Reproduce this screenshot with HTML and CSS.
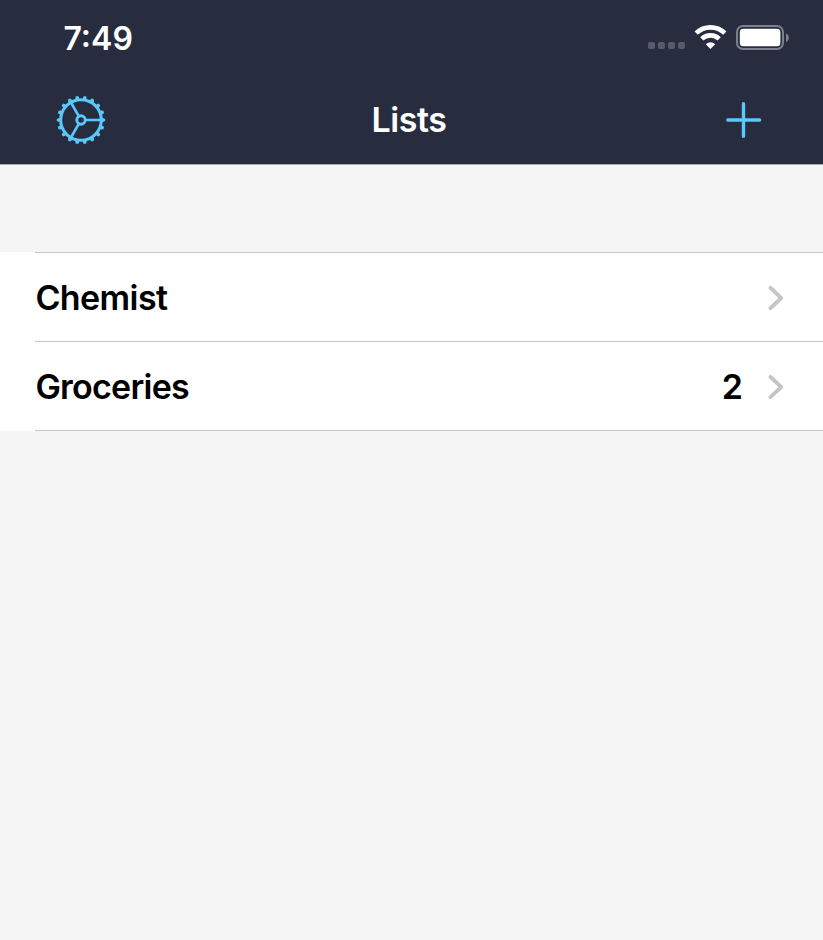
FILE: index.html
```html
<!DOCTYPE html>
<html lang="en">
<head>
<meta charset="utf-8">
<title>Lists</title>
<link rel="stylesheet" href="styles.css">
</head>
<body>
<header class="header">
  <div class="status">
    <span class="time">7:49</span>
    <svg class="indicators" width="142" height="28" viewBox="0 0 142 28" aria-hidden="true">
      <g fill="#575b69">
        <rect x="0" y="19" width="7" height="7" rx="2"/>
        <rect x="10" y="19" width="7" height="7" rx="2"/>
        <rect x="20" y="19" width="7" height="7" rx="2"/>
        <rect x="30" y="19" width="7" height="7" rx="2"/>
      </g>
      <g fill="none" stroke="#fff" stroke-width="4.6">
        <path d="M48.2 10.2A20.5 20.5 0 0 1 76.8 10.2"/>
        <path d="M53.8 15.9A12.6 12.6 0 0 1 71.2 15.9"/>
      </g>
      <path fill="#fff" d="M57.8 21.2Q62.5 17.4 67.2 21.2L62.5 26Z"/>
      <rect x="89" y="3" width="46" height="23" rx="6" fill="none" stroke="#7d818c" stroke-width="2"/>
      <rect x="91.8" y="5.8" width="40.6" height="17.5" rx="3.5" fill="#fff"/>
      <path d="M138 10.5Q140.8 11.5 140.8 14.7T138 19Z" fill="#7d818c"/>
    </svg>
  </div>
  <nav class="navbar">
    <svg class="gear" width="50" height="50" viewBox="-25 -25 50 50" fill="none" stroke="#5ac8fa" aria-label="Settings">
      <circle r="20.3" stroke-width="3"/>
      <circle class="teeth" r="22" stroke-width="2.2" pathLength="180" stroke-dasharray="4.8 5.2" stroke-dashoffset="2.4"/>
      <circle class="teeth" r="23" stroke-width="2.4" pathLength="180" stroke-dasharray="3.4 6.6" stroke-dashoffset="1.7"/>
      <circle r="4.2" stroke-width="2.9"/>
      <path d="M5 0H20M-2.5-4.3L-10-17.3M-2.5 4.3L-10 17.3" stroke-width="2.7"/>
    </svg>
    <h1 class="title">Lists</h1>
    <svg class="plus" width="36" height="36" viewBox="0 0 36 36" fill="none" stroke="#5ac8fa" stroke-width="3.4" stroke-linecap="round" aria-label="Add">
      <path d="M1.8 18H33.6M17.5 1.8V34.2"/>
    </svg>
  </nav>
</header>
<main class="lists">
  <div class="row">
    <div class="content">
      <span class="name chemist">Chemist</span>
      <svg class="chevron" width="16" height="26" viewBox="0 0 16 26"><path d="M2.5 2.8L13.2 13L2.5 23.2"/></svg>
    </div>
  </div>
  <div class="row">
    <div class="content">
      <span class="name">Groceries</span>
      <span class="count">2</span>
      <svg class="chevron" width="16" height="26" viewBox="0 0 16 26"><path d="M2.5 2.8L13.2 13L2.5 23.2"/></svg>
    </div>
  </div>
</main>
</body>
</html>
```
FILE: styles.css
```css
* {
  box-sizing: border-box;
}

body {
  margin: 0;
  min-height: 940px;
  background: #f5f5f5;
  color: #000;
  font-family: Inter, "Liberation Sans", sans-serif;
  font-size: 34px;
  font-weight: 600;
}

.header {
  height: 165px;
  background: #272d3f;
  border-bottom: 1px solid #a9abb2;
  color: #fff;
}

.status {
  display: flex;
  justify-content: space-between;
  height: 76px;
  padding: 23px 33px 0 63.5px;
}

.time {
  padding-top: 1px;
  font-size: 32px;
  font-weight: 570;
  line-height: 30px;
}

.navbar {
  display: grid;
  grid-template-columns: 1fr auto 1fr;
  align-items: center;
  height: 88px;
  padding: 0 61px 0 56px;
}

.title {
  margin: 0;
  font-size: 34px;
  font-weight: 580;
  letter-spacing: -0.4px;
  line-height: 42px;
}

.plus {
  justify-self: end;
}

.lists {
  margin-top: 87px;
}

.row {
  padding-left: 35px;
  background: #fff;
}

.content {
  display: flex;
  align-items: center;
  height: 89px;
  padding: 1px 39px 0 0.4px;
  border-top: 1px solid #c6c6c8;
}

.row:last-child .content {
  height: 90px;
  border-bottom: 1px solid #c6c6c8;
}

.name {
  flex: 1;
  letter-spacing: -0.75px;
}

.chemist {
  letter-spacing: -0.6px;
}

.count {
  margin-right: 25px;
}

.chevron {
  fill: none;
  stroke: #c5c5c7;
  stroke-width: 3.8;
  stroke-linecap: round;
  stroke-linejoin: round;
}
```
